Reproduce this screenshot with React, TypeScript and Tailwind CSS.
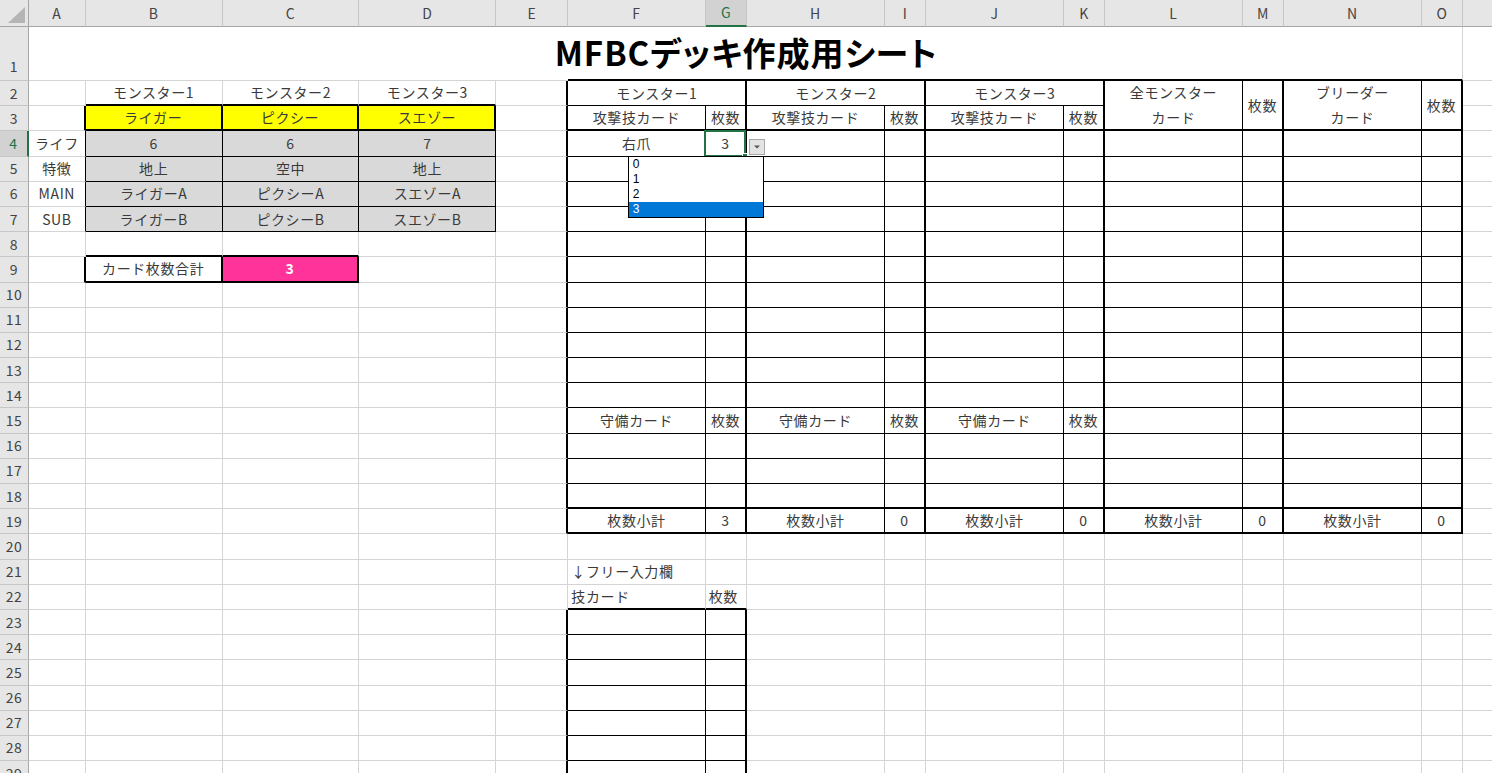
import React from 'react';

type B = 'g' | 't' | 'T' | 'n';

const RC: Record<B, string> = {
  g: 'border-r border-r-[#d4d4d4]',
  t: 'border-r border-r-black',
  T: 'border-r-2 border-r-black',
  n: '',
};
const BC: Record<B, string> = {
  g: 'border-b border-b-[#d4d4d4]',
  t: 'border-b border-b-black',
  T: 'border-b-2 border-b-black',
  n: '',
};

const LETTERS = ['A', 'B', 'C', 'D', 'E', 'F', 'G', 'H', 'I', 'J', 'K', 'L', 'M', 'N', 'O', 'P'];
const NROWS = 29;

function rightB(r: number, c: number): B {
  if (r === 1) return c >= 15 ? 'g' : 'n';
  if (r >= 2 && r <= 19 && c >= 5 && c <= 15) {
    if (c === 5) return 'T';
    if (c === 7 || c === 9 || c === 11 || c === 13 || c === 15) return 'T';
    return 't';
  }
  if (r === 3 && c >= 1 && c <= 4) return 'T';
  if (r >= 4 && r <= 7 && c >= 1 && c <= 4) return 't';
  if (r === 9 && c >= 1 && c <= 3) return 'T';
  if (r >= 23) {
    if (c === 5 || c === 7) return 'T';
    if (c === 6) return 't';
  }
  return 'g';
}

function bottomB(r: number, c: number): B {
  if (r === 1) return c >= 6 && c <= 15 ? 'T' : 'g';
  if (c >= 6 && c <= 15 && r >= 2 && r <= 19) {
    if (r === 2) return 't';
    if (r === 3) return 'T';
    if (r >= 4 && r <= 17) return 't';
    return 'T';
  }
  if (c >= 2 && c <= 4) {
    if (r === 2 || r === 3) return 'T';
    if (r >= 4 && r <= 7) return 't';
  }
  if (c >= 2 && c <= 3 && (r === 8 || r === 9)) return 'T';
  if (c >= 6 && c <= 7) {
    if (r === 22) return 'T';
    if (r >= 23) return 't';
  }
  return 'g';
}

type Cell = { text?: React.ReactNode; left?: boolean; bg?: string; strong?: boolean };

const two = (a: string, b: string) => (
  <div className="flex flex-col items-center leading-[25px]">
    <span>{a}</span>
    <span>{b}</span>
  </div>
);

const content: Record<string, Cell> = {
  B2: { text: 'モンスター1' },
  C2: { text: 'モンスター2' },
  D2: { text: 'モンスター3' },
  B3: { text: 'ライガー', bg: 'bg-[#ffff00]' },
  C3: { text: 'ピクシー', bg: 'bg-[#ffff00]' },
  D3: { text: 'スエゾー', bg: 'bg-[#ffff00]' },
  A4: { text: 'ライフ' },
  B4: { text: '6', bg: 'bg-[#d9d9d9]' },
  C4: { text: '6', bg: 'bg-[#d9d9d9]' },
  D4: { text: '7', bg: 'bg-[#d9d9d9]' },
  A5: { text: '特徴' },
  B5: { text: '地上', bg: 'bg-[#d9d9d9]' },
  C5: { text: '空中', bg: 'bg-[#d9d9d9]' },
  D5: { text: '地上', bg: 'bg-[#d9d9d9]' },
  A6: { text: 'MAIN' },
  B6: { text: 'ライガーA', bg: 'bg-[#d9d9d9]' },
  C6: { text: 'ピクシーA', bg: 'bg-[#d9d9d9]' },
  D6: { text: 'スエゾーA', bg: 'bg-[#d9d9d9]' },
  A7: { text: 'SUB' },
  B7: { text: 'ライガーB', bg: 'bg-[#d9d9d9]' },
  C7: { text: 'ピクシーB', bg: 'bg-[#d9d9d9]' },
  D7: { text: 'スエゾーB', bg: 'bg-[#d9d9d9]' },
  B9: { text: 'カード枚数合計' },
  C9: { text: '3', bg: 'bg-[#ff3399]', strong: true },
  F2: { text: 'モンスター1' },
  H2: { text: 'モンスター2' },
  J2: { text: 'モンスター3' },
  L2: { text: two('全モンスター', 'カード') },
  M2: { text: '枚数' },
  N2: { text: two('ブリーダー', 'カード') },
  O2: { text: '枚数' },
  F3: { text: '攻撃技カード' },
  G3: { text: '枚数' },
  H3: { text: '攻撃技カード' },
  I3: { text: '枚数' },
  J3: { text: '攻撃技カード' },
  K3: { text: '枚数' },
  F4: { text: '右爪' },
  F15: { text: '守備カード' },
  G15: { text: '枚数' },
  H15: { text: '守備カード' },
  I15: { text: '枚数' },
  J15: { text: '守備カード' },
  K15: { text: '枚数' },
  F19: { text: '枚数小計' },
  G19: { text: '3' },
  H19: { text: '枚数小計' },
  I19: { text: '0' },
  J19: { text: '枚数小計' },
  K19: { text: '0' },
  L19: { text: '枚数小計' },
  M19: { text: '0' },
  N19: { text: '枚数小計' },
  O19: { text: '0' },
  F21: { text: '↓フリー入力欄', left: true },
  F22: { text: '技カード', left: true },
  G22: { text: '枚数', left: true },
};

function Corner() {
  return (
    <div className="bg-[#e6e6e6] border-r border-r-[#a6a6a6] border-b border-b-[#a6a6a6] flex items-end justify-end">
      <svg width="28" height="26" viewBox="0 0 28 26">
        <polygon points="25,7 25,23 8,23" fill="#b5b5b5" />
      </svg>
    </div>
  );
}

function SelectedCell() {
  return (
    <div className={`relative flex items-center justify-center ${RC.T} ${BC.t}`}>
      <span>3</span>
      <div className="absolute -left-[2px] -top-[1px] -right-[1px] -bottom-[1px] border-2 border-[#217346] z-10 pointer-events-none" />
      <div className="absolute -right-[3px] -bottom-[3px] w-[6px] h-[6px] bg-[#217346] border border-white z-20" />
      <div className="absolute left-[43px] top-[8px] w-[16px] h-[16px] bg-[#e3e3e3] border border-[#a9a9a9] z-20 flex items-center justify-center">
        <svg width="8" height="6" viewBox="0 0 8 6">
          <polygon points="1,1.5 7,1.5 4,4.5" fill="#555" />
        </svg>
      </div>
      <div className="absolute left-[-78px] top-[25px] w-[136px] bg-white border border-black z-30 flex flex-col font-['Liberation_Sans',sans-serif] text-[12px] leading-[15px] text-black tracking-normal">
        <div className="pl-[4px] h-[15px]">0</div>
        <div className="pl-[4px] h-[15px]">1</div>
        <div className="pl-[4px] h-[15px]">2</div>
        <div className="pl-[4px] h-[15px] bg-[#0078d7] text-white">3</div>
      </div>
    </div>
  );
}

export default function App() {
  const cells: React.ReactNode[] = [];
  cells.push(<Corner key="corner" />);
  LETTERS.forEach((l, i) => {
    const sel = l === 'G';
    cells.push(
      <div
        key={'h' + l}
        className={
          sel
            ? 'bg-[#d2d2d2] border-r border-r-[#c6c6c6] border-b-2 border-b-[#217346] flex items-center justify-center text-[#217346]'
            : 'bg-[#e6e6e6] border-r border-r-[#c6c6c6] border-b border-b-[#a6a6a6] flex items-center justify-center text-[#444]'
        }
      >
        {i < 15 ? l : ''}
      </div>
    );
  });

  for (let r = 1; r <= NROWS; r++) {
    const selRow = r === 4;
    cells.push(
      <div
        key={'r' + r}
        className={
          selRow
            ? 'bg-[#d2d2d2] border-r-2 border-r-[#217346] border-b border-b-[#c6c6c6] flex items-center justify-center text-[#217346]'
            : r === 1
            ? 'bg-[#e6e6e6] border-r border-r-[#a6a6a6] border-b border-b-[#c6c6c6] flex items-end justify-center pb-[3px] text-[#444]'
            : 'bg-[#e6e6e6] border-r border-r-[#a6a6a6] border-b border-b-[#c6c6c6] flex items-center justify-center text-[#444]'
        }
      >
        {r}
      </div>
    );
    for (let c = 1; c <= 16; c++) {
      if (r === 3 && c >= 12 && c <= 15) continue;
      if (r === 2 && (c === 7 || c === 9 || c === 11)) continue;
      const key = LETTERS[c - 1] + r;
      if (key === 'G4') {
        cells.push(<SelectedCell key={key} />);
        continue;
      }
      let span = '';
      let rc = c;
      let rr = r;
      if (r === 2 && (c === 6 || c === 8 || c === 10)) {
        span = 'col-span-2';
        rc = c + 1;
      }
      if (r === 2 && c >= 12 && c <= 15) {
        span = 'row-span-2';
        rr = 3;
      }
      const info = content[key];
      let inner: React.ReactNode = null;
      let align = info?.left ? 'justify-start pl-[3px]' : 'justify-center';
      if (key === 'A1') {
        align = 'justify-start';
        inner = (
          <div className="w-[1434.4px] shrink-0 h-full flex items-center justify-center pb-[2px] font-bold text-[33px] text-black [font-feature-settings:'palt'] tracking-[1px]">
            MFBCデッキ作成用シート
          </div>
        );
      } else if (info) {
        inner = info.text;
      }
      const txt = info?.strong ? 'text-white font-bold' : '';
      cells.push(
        <div
          key={key}
          className={`flex items-center whitespace-nowrap min-w-0 ${align} ${span} ${RC[rightB(r, rc)]} ${BC[bottomB(rr, c)]} ${info?.bg ?? ''} ${txt}`}
        >
          {inner}
        </div>
      );
    }
  }

  return (
    <div className="w-[1492px] h-[773px] overflow-hidden bg-white font-['Noto_Sans_CJK_JP','Noto_Sans',sans-serif] text-[14px] text-[#3a3a3a] tracking-[0.6px]">
      <div className="grid w-max grid-cols-[29px_56.7px_136.9px_136.9px_136.9px_72px_137.3px_41.7px_137.3px_41.7px_137.3px_41.7px_137.3px_41.7px_137.3px_41.7px_72px] grid-rows-[27px_54px_repeat(29,25.2px)]">
        {cells}
      </div>
    </div>
  );
}
